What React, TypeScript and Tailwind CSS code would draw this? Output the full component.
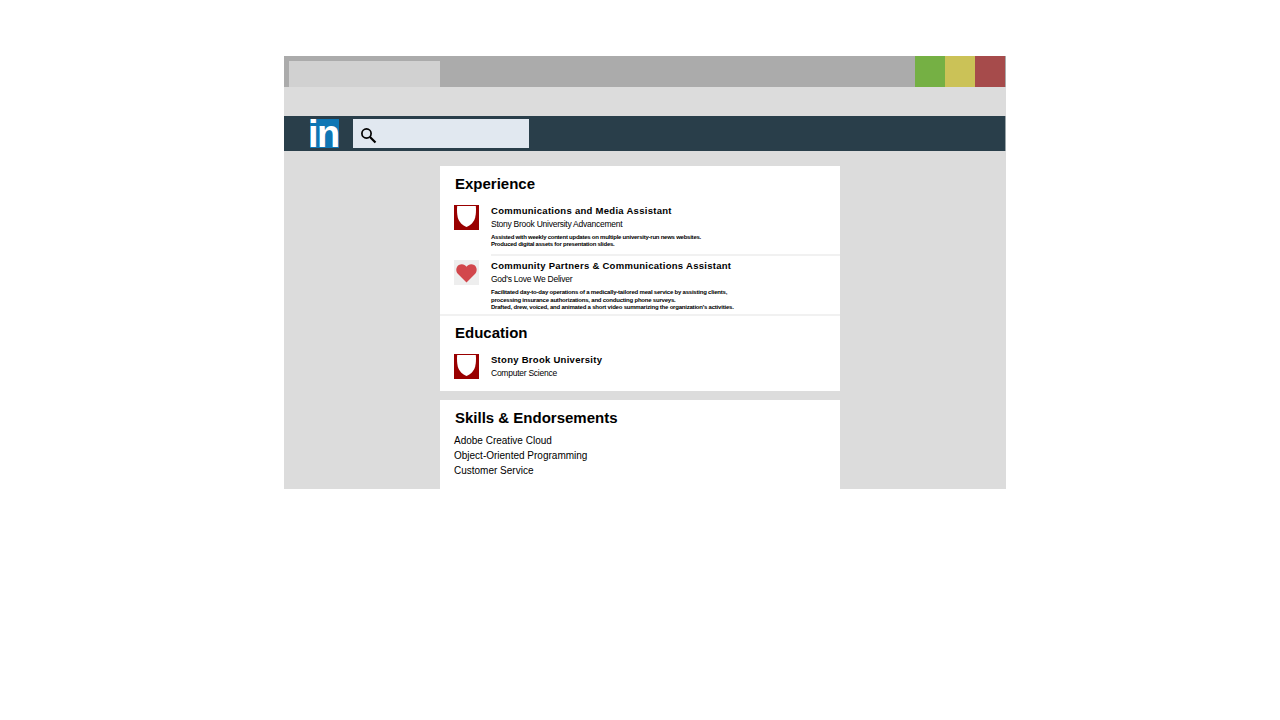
import React from 'react';

const Shield = () => (
  <div className="w-[25px] h-[25px] shrink-0 bg-[#990000] flex items-center justify-center">
    <svg width="25" height="25" viewBox="0 0 25 25">
      <path d="M3.2 1H21.8C22.2 5 22 9 21.2 12.5C20 17 16.5 20.5 12.5 22C8.5 20.5 5 17 3.8 12.5C3 9 2.8 5 3.2 1Z" fill="#ffffff" />
    </svg>
  </div>
);

const Heart = () => (
  <div className="w-[25px] h-[25px] shrink-0 bg-[#eeeeee] flex items-center justify-center">
    <svg width="25" height="25" viewBox="0 0 25 25">
      <path d="M12.5 22.5L3.8 13.8C1.4 11.2 2 6.8 4.8 5C7.6 3.4 10.9 4.2 12.5 6.8C14.1 4.2 17.4 3.4 20.2 5C23 6.8 23.6 11.2 21.2 13.8Z" fill="#d2474c" />
    </svg>
  </div>
);

const SearchGlyph = () => (
  <svg width="17" height="17" viewBox="0 0 17 17" fill="none" stroke="#000000" className="mt-[3px]">
    <circle cx="6.5" cy="6.5" r="4.6" strokeWidth="1.7" />
    <path d="M10 10L15.5 15.5" strokeWidth="2.2" />
  </svg>
);

export default function App() {
  return (
    <div className="w-[1280px] h-[720px] bg-white pt-[56px] pl-[284px] font-['Liberation_Sans',Arial,sans-serif] text-black overflow-hidden">
      <div className="w-[722px] h-[433px] bg-[#dcdcdc] flex flex-col">
        {/* browser chrome */}
        <div className="h-[31px] bg-[#ababab] flex justify-between pr-px">
          <div className="mt-[5px] ml-[5px] w-[151px] h-[26px] bg-[#d1d1d1]" />
          <div className="flex">
            <div className="w-[30px] bg-[#75b044]" />
            <div className="w-[30px] bg-[#cbc257]" />
            <div className="w-[30px] bg-[#a64b4b]" />
          </div>
        </div>
        <div className="h-[29px]" />

        {/* linkedin nav */}
        <div className="h-[35px] bg-[#293e4a] border-r border-[#9aa4a8] flex items-start pt-[3px] pl-[26px]">
          <div className="w-[29px] h-[29px] pt-[2px] bg-[#0e76b4] text-white font-bold text-[38px] leading-[27px] tracking-[-1.5px] whitespace-nowrap">
            <span className="-ml-[2px]">in</span>
          </div>
          <div className="ml-[14px] w-[176px] h-[29px] bg-[#e1e8f0] flex items-center pl-[7px]">
            <SearchGlyph />
          </div>
        </div>

        <div className="flex flex-col pl-[156px] pt-[15px]">
          <div className="w-[400px] h-[225px] bg-white flex flex-col">
            <h2 className="pl-[15px] pt-[9px] h-[39px] text-[15px] leading-[18px] font-bold">Experience</h2>

            <div className="flex pl-[14px] h-[49px]">
              <Shield />
              <div className="ml-[12px] flex flex-col">
                <div className="text-[9.5px] leading-[12px] font-bold tracking-[0.28px]">Communications and Media Assistant</div>
                <div className="text-[8.5px] leading-[14px] tracking-[-0.25px]">Stony Brook University Advancement</div>
                <div className="mt-[3px] text-[6px] leading-[7px] font-bold tracking-[-0.24px]">
                  <div>Assisted with weekly content updates on multiple university-run news websites.</div>
                  <div>Produced digital assets for presentation slides.</div>
                </div>
              </div>
            </div>

            <div className="h-[2px] ml-[51px] bg-[#f1f1f1]" />

            <div className="flex pl-[14px] pt-[4px] h-[58px]">
              <Heart />
              <div className="ml-[12px] flex flex-col">
                <div className="text-[9.5px] leading-[12px] font-bold tracking-[0.28px]">Community Partners &amp; Communications Assistant</div>
                <div className="text-[8.5px] leading-[14px] tracking-[-0.25px]">God's Love We Deliver</div>
                <div className="mt-[3px] text-[6px] leading-[7.5px] font-bold tracking-[-0.21px]">
                  <div>Facilitated day-to-day operations of a medically-tailored meal service by assisting clients,</div>
                  <div>processing insurance authorizations, and conducting phone surveys.</div>
                  <div>Drafted, drew, voiced, and animated a short video summarizing the organization's activities.</div>
                </div>
              </div>
            </div>

            <div className="h-[2px] bg-[#f1f1f1]" />

            <h2 className="pl-[15px] pt-[8px] h-[38px] text-[15px] leading-[18px] font-bold">Education</h2>
            <div className="flex pl-[14px]">
              <Shield />
              <div className="ml-[12px] flex flex-col">
                <div className="text-[9.5px] leading-[12px] font-bold tracking-[0.28px]">Stony Brook University</div>
                <div className="text-[8.5px] leading-[14px] tracking-[-0.25px]">Computer Science</div>
              </div>
            </div>
          </div>

          <div className="mt-[9px] w-[400px] h-[89px] bg-white flex flex-col">
            <h2 className="pl-[15px] pt-[9px] h-[33px] text-[15px] leading-[18px] font-bold">Skills &amp; Endorsements</h2>
            <div className="pl-[14px] text-[10px] leading-[15px]">
              <div>Adobe Creative Cloud</div>
              <div>Object-Oriented Programming</div>
              <div>Customer Service</div>
            </div>
          </div>
        </div>
      </div>
    </div>
  );
}
